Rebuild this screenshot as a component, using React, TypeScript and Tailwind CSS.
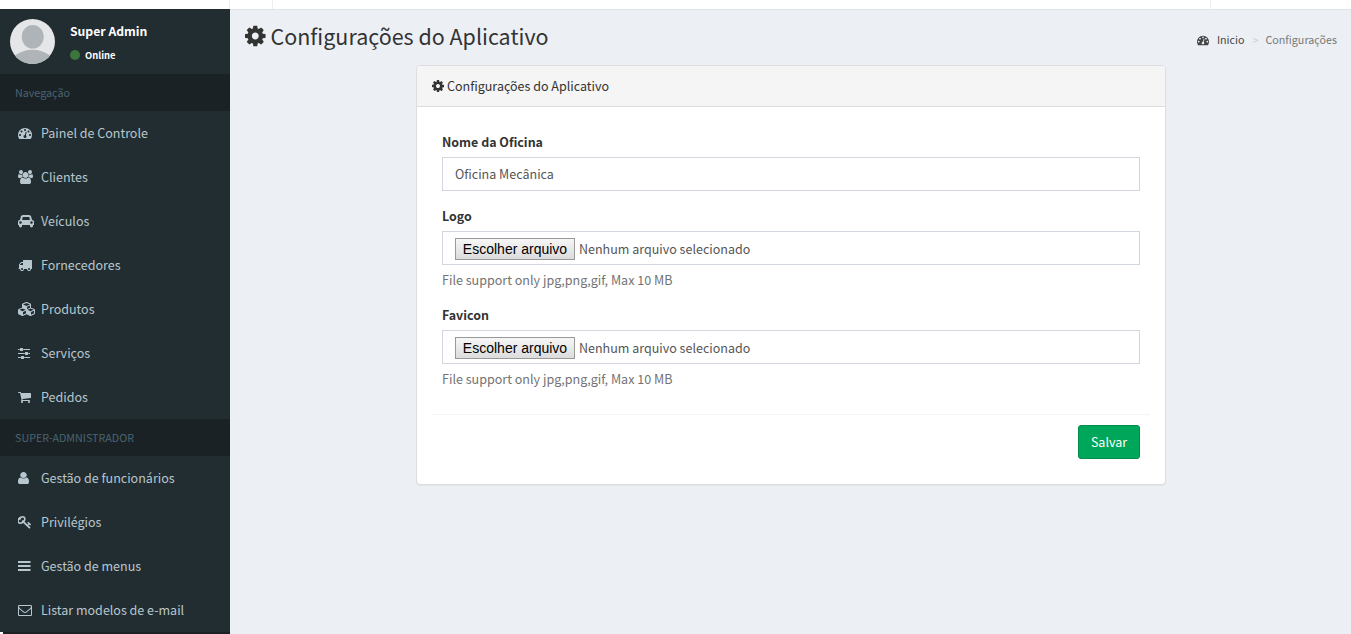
import React from "react";

type Glyph = { box: string; w: number; d: string };

const glyphs: Record<string, Glyph> = {
  cog: {
    box: "128 0 1536 1792",
    w: 1536,
    d: "M1152 896q0-106-75-181t-181-75-181 75-75 181 75 181 181 75 181-75 75-181zm512-109v222q0 12-8 23t-20 13l-185 28q-19 54-39 91 35 50 107 138 10 12 10 25t-9 23q-27 37-99 108t-94 71q-12 0-26-9l-138-108q-44 23-91 38-16 136-29 186-7 28-36 28h-222q-14 0-24.5-8.5t-11.5-21.5l-28-184q-49-16-90-37l-141 107q-10 9-25 9-14 0-25-11-126-114-165-168-7-10-7-23 0-12 8-23 15-21 51-66.5t54-70.5q-27-50-41-99l-183-27q-13-2-21-12.5t-8-23.5v-222q0-12 8-23t19-13l186-28q14-46 39-92-40-57-107-138-10-12-10-24 0-10 9-23 26-36 98.5-107.5t94.5-71.5q13 0 26 10l138 107q44-23 91-38 16-136 29-186 7-28 36-28h222q14 0 24.5 8.5t11.5 21.5l28 184q49 16 90 37l142-107q9-9 24-9 13 0 25 10 129 119 165 170 7 8 7 22 0 12-8 23-15 21-51 66.5t-54 70.5q26 50 41 98l183 28q13 2 21 12.5t8 23.5z",
  },
  dashboard: {
    box: "0 0 1792 1792",
    w: 1792,
    d: "M384 1152q0-53-37.5-90.5t-90.5-37.5-90.5 37.5-37.5 90.5 37.5 90.5 90.5 37.5 90.5-37.5 37.5-90.5zm192-448q0-53-37.5-90.5t-90.5-37.5-90.5 37.5-37.5 90.5 37.5 90.5 90.5 37.5 90.5-37.5 37.5-90.5zm428 481l101-382q6-26-7.5-48.5t-38.5-29.5-48 6.5-30 39.5l-101 382q-60 5-107 43.5t-63 98.5q-20 77 20 146t117 89 146-20 89-117q16-60-6-117t-72-91zm660-33q0-53-37.5-90.5t-90.5-37.5-90.5 37.5-37.5 90.5 37.5 90.5 90.5 37.5 90.5-37.5 37.5-90.5zm-640-640q0-53-37.5-90.5t-90.5-37.5-90.5 37.5-37.5 90.5 37.5 90.5 90.5 37.5 90.5-37.5 37.5-90.5zm448 192q0-53-37.5-90.5t-90.5-37.5-90.5 37.5-37.5 90.5 37.5 90.5 90.5 37.5 90.5-37.5 37.5-90.5zm320 448q0 261-141 483-19 29-54 29h-1402q-35 0-54-29-141-221-141-483 0-182 71-348t191-286 286-191 348-71 348 71 286 191 191 286 71 348z",
  },
  users: {
    box: "0 0 1920 1792",
    w: 1920,
    d: "M593 896q-162 5-265 128h-134q-82 0-138-40.5t-56-118.5q0-353 124-353 6 0 43.5 21t97.5 42.5 119 21.5q67 0 133-23-5 37-5 66 0 139 81 256zm1071 637q0 120-73 189.5t-194 69.5h-874q-121 0-194-69.5t-73-189.5q0-53 3.5-103.5t14-109 26.5-108.5 43-97.5 62-81 85.5-53.5 111.5-20q10 0 43 21.5t73 48 107 48 135 21.5 135-21.5 107-48 73-48 43-21.5q61 0 111.5 20t85.5 53.5 62 81 43 97.5 26.5 108.5 14 109 3.5 103.5zm-1024-1277q0 106-75 181t-181 75-181-75-75-181 75-181 181-75 181 75 75 181zm704 384q0 159-112.5 271.5t-271.5 112.5-271.5-112.5-112.5-271.5 112.5-271.5 271.5-112.5 271.5 112.5 112.5 271.5zm576 225q0 78-56 118.5t-138 40.5h-134q-103-123-265-128 81-117 81-256 0-29-5-66 66 23 133 23 59 0 119-21.5t97.5-42.5 43.5-21q124 0 124 353zm-128-609q0 106-75 181t-181 75-181-75-75-181 75-181 181-75 181 75 75 181z",
  },
  car: {
    box: "0 0 2048 1792",
    w: 2048,
    d: "M480 1088q0-66-47-113t-113-47-113 47-47 113 47 113 113 47 113-47 47-113zm36-320h1016l-89-357q-2-8-14-17.5t-21-9.5h-768q-9 0-21 9.5t-14 17.5zm1372 320q0-66-47-113t-113-47-113 47-47 113 47 113 113 47 113-47 47-113zm160-96v384q0 14-9 23t-23 9h-96v128q0 80-56 136t-136 56-136-56-56-136v-128h-1024v128q0 80-56 136t-136 56-136-56-56-136v-128h-96q-14 0-23-9t-9-23v-384q0-93 65.5-158.5t158.5-65.5h28l105-419q23-94 104-157.5t179-63.5h768q98 0 179 63.5t104 157.5l105 419h28q93 0 158.5 65.5t65.5 158.5z",
  },
  truck: {
    box: "0 0 1792 1792",
    w: 1792,
    d: "M640 1408q0-52-38-90t-90-38-90 38-38 90 38 90 90 38 90-38 38-90zm-384-512h384v-256h-158q-13 0-22 9l-195 195q-9 9-9 22v30zm1280 512q0-52-38-90t-90-38-90 38-38 90 38 90 90 38 90-38 38-90zm256-1088v1024q0 15-4 26.5t-13.5 18.5-16.5 11.5-23.5 6-22.5 2-25.5 0-22.5-.5q0 106-75 181t-181 75-181-75-75-181h-384q0 106-75 181t-181 75-181-75-75-181h-64q-3 0-22.5.5t-25.5 0-22.5-2-23.5-6-16.5-11.5-13.5-18.5-4-26.5q0-26 19-45t45-19v-320q0-8-.5-35t0-38 2.5-34.5 6.5-37 14-30.5 22.5-30l198-198q19-19 50.5-32t58.5-13h160v-192q0-26 19-45t45-19h1024q26 0 45 19t19 45z",
  },
  cubes: {
    box: "0 0 2304 1792",
    w: 2304,
    d: "M640 1632l384-192v-314l-384 164v342zm-64-454l404-173-404-173-404 173zm1088 454l384-192v-314l-384 164v342zm-64-454l404-173-404-173-404 173zm-448-293l384-165v-266l-384 164v267zm-64-379l441-189-441-189-441 189zm1088 518v416q0 36-19 67t-52 47l-448 224q-25 14-57 14t-57-14l-448-224q-4-2-7-4-2 2-7 4l-448 224q-25 14-57 14t-57-14l-448-224q-33-16-52-47t-19-67v-416q0-38 21.5-70t56.5-48l434-186v-400q0-38 21.5-70t56.5-48l448-192q23-10 50-10t50 10l448 192q35 16 56.5 48t21.5 70v400l434 186q36 16 57 48t21 70z",
  },
  sliders: {
    box: "128 0 1536 1792",
    w: 1536,
    d: "M480 1408v128h-352v-128h352zm352-128q26 0 45 19t19 45v256q0 26-19 45t-45 19h-256q-26 0-45-19t-19-45v-256q0-26 19-45t45-19h256zm160-384v128h-864v-128h864zm-640-512v128h-224v-128h224zm1312 1024v128h-736v-128h736zm-960-1152q26 0 45 19t19 45v256q0 26-19 45t-45 19h-256q-26 0-45-19t-19-45v-256q0-26 19-45t45-19h256zm640 512q26 0 45 19t19 45v256q0 26-19 45t-45 19h-256q-26 0-45-19t-19-45v-256q0-26 19-45t45-19h256zm320 128v128h-224v-128h224zm0-512v128h-864v-128h864z",
  },
  cart: {
    box: "64 0 1664 1792",
    w: 1664,
    d: "M704 1536q0 52-38 90t-90 38-90-38-38-90 38-90 90-38 90 38 38 90zm896 0q0 52-38 90t-90 38-90-38-38-90 38-90 90-38 90 38 38 90zm128-1088v512q0 24-16.5 42.5t-40.5 21.5l-1044 122q13 60 13 70 0 16-24 64h920q26 0 45 19t19 45-19 45-45 19h-1024q-26 0-45-19t-19-45q0-11 8-31.5t16-36 21.5-40 15.5-29.5l-177-823h-204q-26 0-45-19t-19-45 19-45 45-19h256q16 0 28.5 6.5t19.5 15.5 13 24.5 8 26 5.5 29.5 4.5 26h1201q26 0 45 19t19 45z",
  },
  user: {
    box: "256 0 1280 1792",
    w: 1408,
    d: "M1536 1399q0 109-62.5 187t-150.5 78h-854q-88 0-150.5-78t-62.5-187q0-85 8.5-160.5t31.5-152 58.5-131 94-89 134.5-34.5q131 128 313 128t313-128q76 0 134.5 34.5t94 89 58.5 131 31.5 152 8.5 160.5zm-256-887q0 159-112.5 271.5t-271.5 112.5-271.5-112.5-112.5-271.5 112.5-271.5 271.5-112.5 271.5 112.5 112.5 271.5z",
  },
  key: {
    box: "100 0 1600 1792",
    w: 1700,
    d: "M832 512q0-80-56-136t-136-56-136 56-56 136q0 42 19 83-41-19-83-19-80 0-136 56t-56 136 56 136 136 56 136-56 56-136q0-42-19-83 41 19 83 19 80 0 136-56t56-136zm851 704q0 17-49 66t-66 49q-9 0-28.5-16t-36.5-33-38.5-40-24.5-26l-96 96 220 220q28 28 28 68 0 42-39 81t-81 39q-40 0-68-28l-671-671q-176 131-365 131-163 0-265.5-102.5t-102.5-265.5q0-160 95-313t248-248 313-95q163 0 265.5 102.5t102.5 265.5q0 189-131 365l355 355 96-96q-3-3-26-24.5t-40-38.5-33-36.5-16-28.5q0-17 49-66t66-49q13 0 23 10 6 6 46 44.5t82 79.5 86.5 86 73 78 28.5 41z",
  },
  bars: {
    box: "128 64 1536 1792",
    w: 1600,
    d: "M1664 1344v256h-1536v-256zm0-512v256h-1536v-256zm0-512v256h-1536v-256z",
  },
  envelope: {
    box: "0 0 1792 1792",
    w: 1792,
    d: "M1664 1504v-768q-32 36-69 66-268 206-426 338-51 43-83 67t-86.5 48.5-102.5 24.5h-2q-48 0-102.5-24.5t-86.5-48.5-83-67q-158-132-426-338-37-30-69-66v768q0 13 9.5 22.5t22.5 9.5h1472q13 0 22.5-9.5t9.5-22.5zm0-1051v-24.5t-.5-13-3-12.5-5.5-9-9-7.5-14-2.5h-1472q-13 0-22.5 9.5t-9.5 22.5q0 168 147 284 193 152 401 317 6 5 35 29.5t46 37.5 44.5 31.5 50.5 27.5 43 9h2q20 0 43-9t50.5-27.5 44.5-31.5 46-37.5 35-29.5q208-165 401-317 54-43 100.5-115.5t46.5-131.5zm128-37v1088q0 66-47 113t-113 47h-1472q-66 0-113-47t-47-113v-1088q0-66 47-113t113-47h1472q66 0 113 47t47 113z",
  },
};

function Icon({ name, size = 14, className = "" }: { name: string; size?: number; className?: string }) {
  const g = glyphs[name];
  return (
    <svg
      viewBox={g.box}
      width={(g.w / 1792) * size}
      height={size}
      preserveAspectRatio="none"
      fill="currentColor"
      className={`shrink-0 ${className}`}
      aria-hidden="true"
    >
      <path d={g.d} />
    </svg>
  );
}

function NavItem({ icon, label }: { icon: string; label: string }) {
  return (
    <a className="flex h-11 items-center pl-[18px] text-[12.53px] text-[#b8c7ce]">
      <span className="flex w-[23px]">
        <Icon name={icon} />
      </span>
      <span className="whitespace-nowrap">{label}</span>
    </a>
  );
}

function NavHeader({ children }: { children: React.ReactNode }) {
  return (
    <div className="flex h-[37px] items-center bg-[#1a2226] pt-0.5 pl-[15px] text-[10.74px] text-[#4b646f]">
      {children}
    </div>
  );
}

function FileField({ label }: { label: string }) {
  return (
    <div className="flex flex-col">
      <label className="mb-[5px] h-5 text-[12.45px] leading-5 font-bold">{label}</label>
      <div className="flex h-[34px] items-center border border-[#d2d6de] pl-3 text-[12.53px] text-[#555]">
        <button className="mt-0.5 h-[22px] w-[120px] border border-[#999] bg-linear-to-b from-[#f6f6f6] to-[#dcdcdc] font-['Liberation_Sans',Arial,sans-serif] text-sm leading-5 whitespace-nowrap text-black">
          Escolher arquivo
        </button>
        <span className="mt-[3px] ml-1">Nenhum arquivo selecionado</span>
      </div>
      <p className="mt-[5px] h-5 text-[12.55px] leading-5 text-[#737373]">File support only jpg,png,gif, Max 10 MB</p>
    </div>
  );
}

export default function App() {
  return (
    <div className="flex h-[634px] w-[1351px] flex-col overflow-hidden bg-[#ecf0f5] font-['Noto_Sans_CJK_JP','Source_Sans_Pro',sans-serif] text-[#333]">
      <header className="flex h-[9px] shrink-0 bg-white">
        <div className="w-[230px] border-r border-[#eee]" />
        <div className="w-[43px] border-r border-[#eee]" />
        <div className="w-[938px] border-r border-[#eee]" />
      </header>

      <div className="flex min-h-0 flex-1">
        <aside className="flex w-[230px] shrink-0 flex-col bg-[#222d32]">
          <div className="flex h-[65px] shrink-0 pt-2.5 pl-2.5">
            <svg width="45" height="45" viewBox="0 0 45 45" aria-hidden="true">
              <defs>
                <clipPath id="avatar">
                  <circle cx="22.5" cy="22.5" r="22.5" />
                </clipPath>
              </defs>
              <g clipPath="url(#avatar)">
                <rect width="45" height="45" fill="#e4e6e8" />
                <ellipse cx="22.7" cy="17.8" rx="11" ry="11.8" fill="#aeb4b8" />
                <ellipse cx="22.5" cy="46.5" rx="22" ry="15.8" fill="#aeb4b8" />
              </g>
            </svg>
            <div className="ml-[15px] flex flex-col text-white">
              <p className="mt-0.5 h-5 text-[12.2px] leading-5 font-bold whitespace-nowrap">Super Admin</p>
              <div className="mt-1.5 flex h-4 items-center text-[9.4px] font-bold">
                <span className="mr-[5px] size-[10px] rounded-full bg-[#3c763d]" />
                Online
              </div>
            </div>
          </div>

          <NavHeader>Navegação</NavHeader>
          <nav>
            <NavItem icon="dashboard" label="Painel de Controle" />
            <NavItem icon="users" label="Clientes" />
            <NavItem icon="car" label="Veículos" />
            <NavItem icon="truck" label="Fornecedores" />
            <NavItem icon="cubes" label="Produtos" />
            <NavItem icon="sliders" label="Serviços" />
            <NavItem icon="cart" label="Pedidos" />
          </nav>
          <NavHeader>SUPER-ADMNISTRADOR</NavHeader>
          <nav>
            <NavItem icon="user" label="Gestão de funcionários" />
            <NavItem icon="key" label="Privilégios" />
            <NavItem icon="bars" label="Gestão de menus" />
            <NavItem icon="envelope" label="Listar modelos de e-mail" />
          </nav>
          <div className="flex flex-1 bg-[#1a2226]">
            <div className="h-full w-[3px] bg-white" />
          </div>
        </aside>

        <main className="flex flex-1 flex-col border-t border-[#dfe3e8]">
          <div className="flex h-[55px] shrink-0 justify-between pr-3.5 pl-[15px]">
            <h1 className="mt-[13px] flex h-[26px] items-center self-start text-[21.48px] leading-[26px]">
              <Icon name="cog" size={24} className="mr-[5px]" />
              Configurações do Aplicativo
            </h1>
            <div className="mt-[22px] flex h-4 items-center text-[10.74px] leading-4">
              <Icon name="dashboard" size={12} className="mr-2 text-[#444]" />
              <span className="text-[#444]">Inicio</span>
              <span className="mr-[7px] ml-2 text-[#ccc]">&gt;</span>
              <span className="text-[#777]">Configurações</span>
            </div>
          </div>

          <section className="ml-[186px] flex h-[420px] w-[750px] flex-col rounded-[4px] border border-[#ddd] bg-white shadow-[0_1px_1px_rgba(0,0,0,0.05)]">
            <div className="flex h-[41px] shrink-0 items-center rounded-t-[3px] border-b border-[#ddd] bg-[#f5f5f5] pl-[15px] text-[12.53px]">
              <Icon name="cog" className="mr-[3px]" />
              Configurações do Aplicativo
            </div>
            <form className="flex flex-col px-[15px] pt-[25px]">
              <div className="flex flex-col gap-[15px] px-2.5">
                <div className="flex flex-col">
                  <label className="mb-[5px] h-5 text-[12.45px] leading-5 font-bold">Nome da Oficina</label>
                  <input
                    className="h-[34px] border border-[#d2d6de] px-3 pb-0.5 text-[12.53px] text-[#555] outline-none"
                    defaultValue="Oficina Mecânica"
                  />
                </div>
                <FileField label="Logo" />
                <FileField label="Favicon" />
              </div>
              <div className="mt-[25px] flex justify-end border-t border-[#f4f4f4] pt-2.5 pr-2.5">
                <button className="h-[34px] w-[62px] rounded-[3px] border border-[#008d4c] bg-[#00a65a] text-[12.53px] text-white">
                  Salvar
                </button>
              </div>
            </form>
          </section>
        </main>
      </div>
    </div>
  );
}
